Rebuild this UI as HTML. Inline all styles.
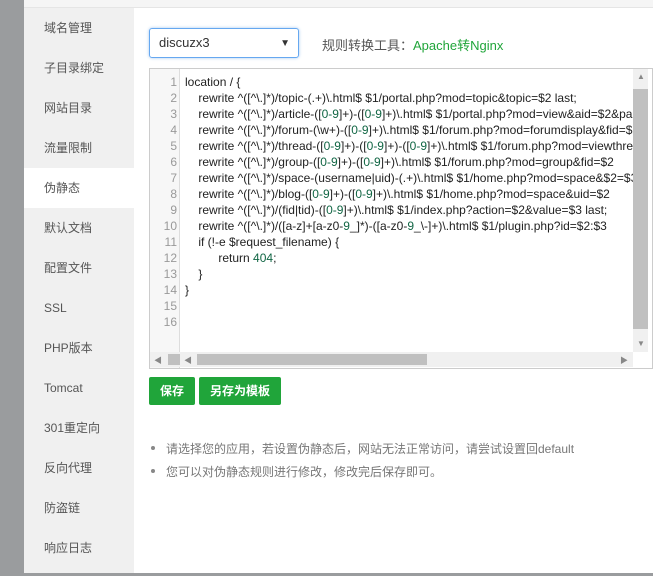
<!DOCTYPE html>
<html><head><meta charset="utf-8"><style>
*{margin:0;padding:0;box-sizing:border-box}
body{width:653px;height:576px;overflow:hidden;background:#fff;font-family:"Liberation Sans","Noto Sans CJK SC",sans-serif;position:relative}
.lg{position:absolute;left:0;top:0;width:24px;height:576px;background:#9a9c9e}
.bt{position:absolute;left:0;top:573px;width:653px;height:3px;background:#9a9c9e}
.top{position:absolute;left:24px;top:0;width:629px;height:8px;background:#f5f5f5;border-bottom:1px solid #e5e5e5}
.side{position:absolute;left:24px;top:8px;width:110px;height:565px;background:#f0f0f0}
.side div{height:40px;line-height:40px;padding-left:20px;font-size:12px;color:#555}
.side div.a{background:#fff}
.sel{position:absolute;left:149px;top:28px;width:150px;height:30px;border:1px solid #66a8f0;border-radius:3px;box-shadow:0 0 3px #a6c8f0;font-size:13px;color:#333;line-height:28px;padding-left:9px}
.sel span{position:absolute;right:8px;top:1px;font-size:10px}
.lab{position:absolute;left:322px;top:35px;font-size:13px;color:#555}
.lab b{font-weight:normal;color:#20a53a}
.ed{position:absolute;left:149px;top:68px;width:504px;height:301px;border:1px solid #ccc;overflow:hidden;background:#fff}
.gut{position:absolute;left:0;top:0;width:30px;height:300px;background:#f7f7f7;border-right:1px solid #ddd}
.ln{position:absolute;left:0;top:5px;width:27px;text-align:right;font-size:12px;line-height:16px;color:#999}
.code{position:absolute;left:35px;top:5px;font-size:12px;line-height:16px;color:#222;white-space:pre;width:448px;overflow:hidden}
.code i{font-style:normal;color:#164}
.vs{position:absolute;left:483px;top:0;width:15px;height:283px;background:#f0f0f0}
.vs .th{position:absolute;left:0;top:20px;width:15px;height:240px;background:#c0c0c0}
.hs{position:absolute;left:0;top:283px;width:483px;height:15px;background:#f0f0f0}
.hs .th{position:absolute;left:47px;top:2px;width:230px;height:11px;background:#c0c0c0}
.hs .th2{position:absolute;left:18px;top:2px;width:12px;height:11px;background:#c0c0c0}
.ar{position:absolute;font-size:8px;color:#888}
.btn{position:absolute;top:377px;height:28px;background:#20a53a;color:#fff;font-size:12px;font-weight:bold;line-height:28px;text-align:center;border-radius:2px}
.nt{position:absolute;left:166px;font-size:12px;color:#777}
.dot{position:absolute;left:151px;width:4px;height:4px;border-radius:2px;background:#888}
</style></head><body>
<div class="lg"></div><div class="top"></div>
<div class="side">
<div>域名管理</div><div>子目录绑定</div><div>网站目录</div><div>流量限制</div><div class="a">伪静态</div><div>默认文档</div><div>配置文件</div><div>SSL</div><div>PHP版本</div><div>Tomcat</div><div>301重定向</div><div>反向代理</div><div>防盗链</div><div>响应日志</div>
</div>
<div class="bt"></div>
<div class="sel">discuzx3<span>▼</span></div>
<div class="lab">规则转换工具：<b>Apache转Nginx</b></div>
<div class="ed">
<div class="gut"></div>
<div class="ln">1<br>2<br>3<br>4<br>5<br>6<br>7<br>8<br>9<br>10<br>11<br>12<br>13<br>14<br>15<br>16</div>
<div class="code">location / {
    rewrite ^([^\.]*)/topic-(.+)\.html$ $1/portal.php?mod=topic&amp;topic=$2 last;
    rewrite ^([^\.]*)/article-([<i>0-9</i>]+)-([<i>0-9</i>]+)\.html$ $1/portal.php?mod=view&amp;aid=$2&amp;page=$3 last;
    rewrite ^([^\.]*)/forum-(\w+)-([<i>0-9</i>]+)\.html$ $1/forum.php?mod=forumdisplay&amp;fid=$2
    rewrite ^([^\.]*)/thread-([<i>0-9</i>]+)-([<i>0-9</i>]+)-([<i>0-9</i>]+)\.html$ $1/forum.php?mod=viewthread
    rewrite ^([^\.]*)/group-([<i>0-9</i>]+)-([<i>0-9</i>]+)\.html$ $1/forum.php?mod=group&amp;fid=$2
    rewrite ^([^\.]*)/space-(username|uid)-(.+)\.html$ $1/home.php?mod=space&amp;$2=$3
    rewrite ^([^\.]*)/blog-([<i>0-9</i>]+)-([<i>0-9</i>]+)\.html$ $1/home.php?mod=space&amp;uid=$2
    rewrite ^([^\.]*)/(fid|tid)-([<i>0-9</i>]+)\.html$ $1/index.php?action=$2&amp;value=$3 last;
    rewrite ^([^\.]*)/([a-z]+[a-z0-<i>9</i>_]*)-([a-z0-<i>9</i>_\-]+)\.html$ $1/plugin.php?id=$2:$3
    if (!-e $request_filename) {
          return <i>404</i>;
    }
}</div>
<div class="vs"><div class="th"></div><span class="ar" style="left:4px;top:3px">▲</span><span class="ar" style="left:4px;top:270px">▼</span></div>
<div class="hs"><div class="th2"></div><div class="th"></div><span class="ar" style="left:4px;top:3px">◀</span><span class="ar" style="left:34px;top:3px">◀</span><span class="ar" style="left:470px;top:3px">▶</span></div>
</div>
<div class="btn" style="left:149px;width:46px">保存</div>
<div class="btn" style="left:199px;width:82px">另存为模板</div>
<div class="dot" style="top:446px"></div><div class="nt" style="top:440px">请选择您的应用，若设置伪静态后，网站无法正常访问，请尝试设置回default</div>
<div class="dot" style="top:469px"></div><div class="nt" style="top:463px">您可以对伪静态规则进行修改，修改完后保存即可。</div>
</body></html>
